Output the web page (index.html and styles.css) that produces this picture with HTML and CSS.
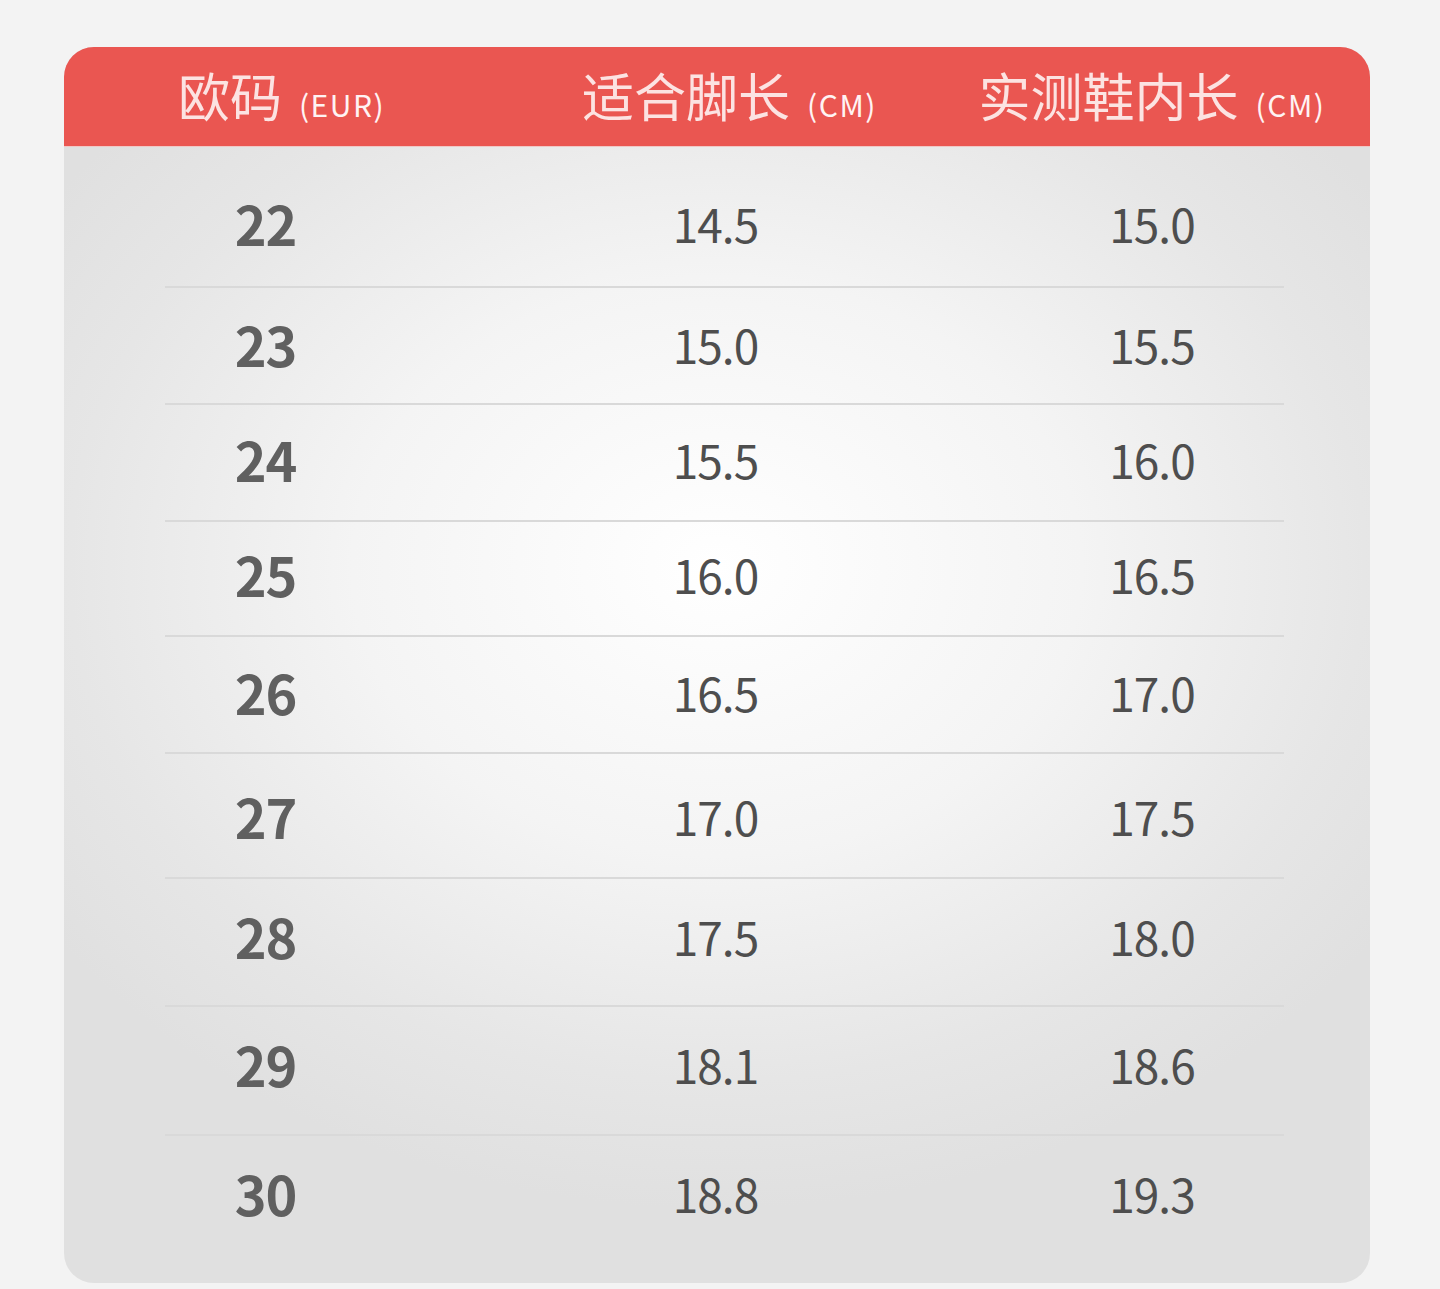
FILE: index.html
```html
<!DOCTYPE html>
<html lang="zh">
<head>
<meta charset="utf-8">
<title>尺码表</title>
<link rel="stylesheet" href="styles.css">
</head>
<body>
<div class="card">
  <div class="head">
    <div class="hcell">欧码<span class="unit">(EUR)</span></div>
    <div class="hcell mid">适合脚长<span class="unit">(CM)</span></div>
    <div class="hcell">实测鞋内长<span class="unit">(CM)</span></div>
  </div>
  <div class="body">
    <div class="row r1"><div class="c size">22</div><div class="c">14.5</div><div class="c">15.0</div></div>
    <div class="rule"></div>
    <div class="row r2"><div class="c size">23</div><div class="c">15.0</div><div class="c">15.5</div></div>
    <div class="rule"></div>
    <div class="row r3"><div class="c size">24</div><div class="c">15.5</div><div class="c">16.0</div></div>
    <div class="rule"></div>
    <div class="row r4"><div class="c size">25</div><div class="c">16.0</div><div class="c">16.5</div></div>
    <div class="rule"></div>
    <div class="row r5"><div class="c size">26</div><div class="c">16.5</div><div class="c">17.0</div></div>
    <div class="rule"></div>
    <div class="row r6"><div class="c size">27</div><div class="c">17.0</div><div class="c">17.5</div></div>
    <div class="rule"></div>
    <div class="row r7"><div class="c size">28</div><div class="c">17.5</div><div class="c">18.0</div></div>
    <div class="rule"></div>
    <div class="row r8"><div class="c size">29</div><div class="c">18.1</div><div class="c">18.6</div></div>
    <div class="rule"></div>
    <div class="row r9"><div class="c size">30</div><div class="c">18.8</div><div class="c">19.3</div></div>
  </div>
</div>
</body>
</html>
```

FILE: styles.css
```css
html, body {
  margin: 0;
  padding: 0;
  background: #f3f3f3;
}
body {
  font-family: "Noto Sans CJK SC", "Noto Sans", sans-serif;
  padding: 47px 0 6px 64px;
}
.card {
  width: 1306px;
  height: 1236px;
  border-radius: 30px;
  overflow: hidden;
  background: radial-gradient(ellipse 62% 52% at 50% 42%, #ffffff 0%, #f4f4f4 45%, #e6e6e6 80%, #e0e0e0 100%);
}
.head {
  height: 100px;
  background: #ea5651;
  display: grid;
  grid-template-columns: 435px 435px 436px;
  align-items: center;
  border-bottom: 1px solid #f0c8c6;
  box-sizing: border-box;
}
.hcell {
  text-align: center;
  color: #fce3e2;
  font-size: 52px;
  line-height: 96px;
  white-space: nowrap;
}
.hcell.mid {
  padding-left: 26px;
}
.unit {
  font-size: 30px;
  margin-left: 17px;
  letter-spacing: 1.5px;
  color: #fff3f3;
}
.body {
  padding-top: 20px;
}
.row {
  display: grid;
  grid-template-columns: 435px 435px 436px;
  box-sizing: border-box;
}
.c {
  text-align: center;
  font-size: 46px;
  font-weight: 400;
  line-height: 60px;
  color: #4e4e4e;
  letter-spacing: -1px;
}
.c.size {
  font-size: 54px;
  font-weight: 700;
  color: #606060;
  letter-spacing: -1px;
  padding-right: 32px;
}
.c:nth-child(2) {
  padding-right: 2px;
}
.rule {
  height: 2px;
  margin: 0 86px 0 101px;
  background: #d9d9d9;
}
.r1 { height: 119px; padding-top: 26px; }
.r2 { height: 115px; padding-top: 26px; }
.r3 { height: 115px; padding-top: 24px; }
.r4 { height: 113px; padding-top: 22px; }
.r5 { height: 115px; padding-top: 25px; }
.r6 { height: 123px; padding-top: 32px; }
.r7 { height: 126px; padding-top: 27px; }
.r8 { height: 127px; padding-top: 27px; }
.r9 { height: 147px; padding-top: 27px; }
```
